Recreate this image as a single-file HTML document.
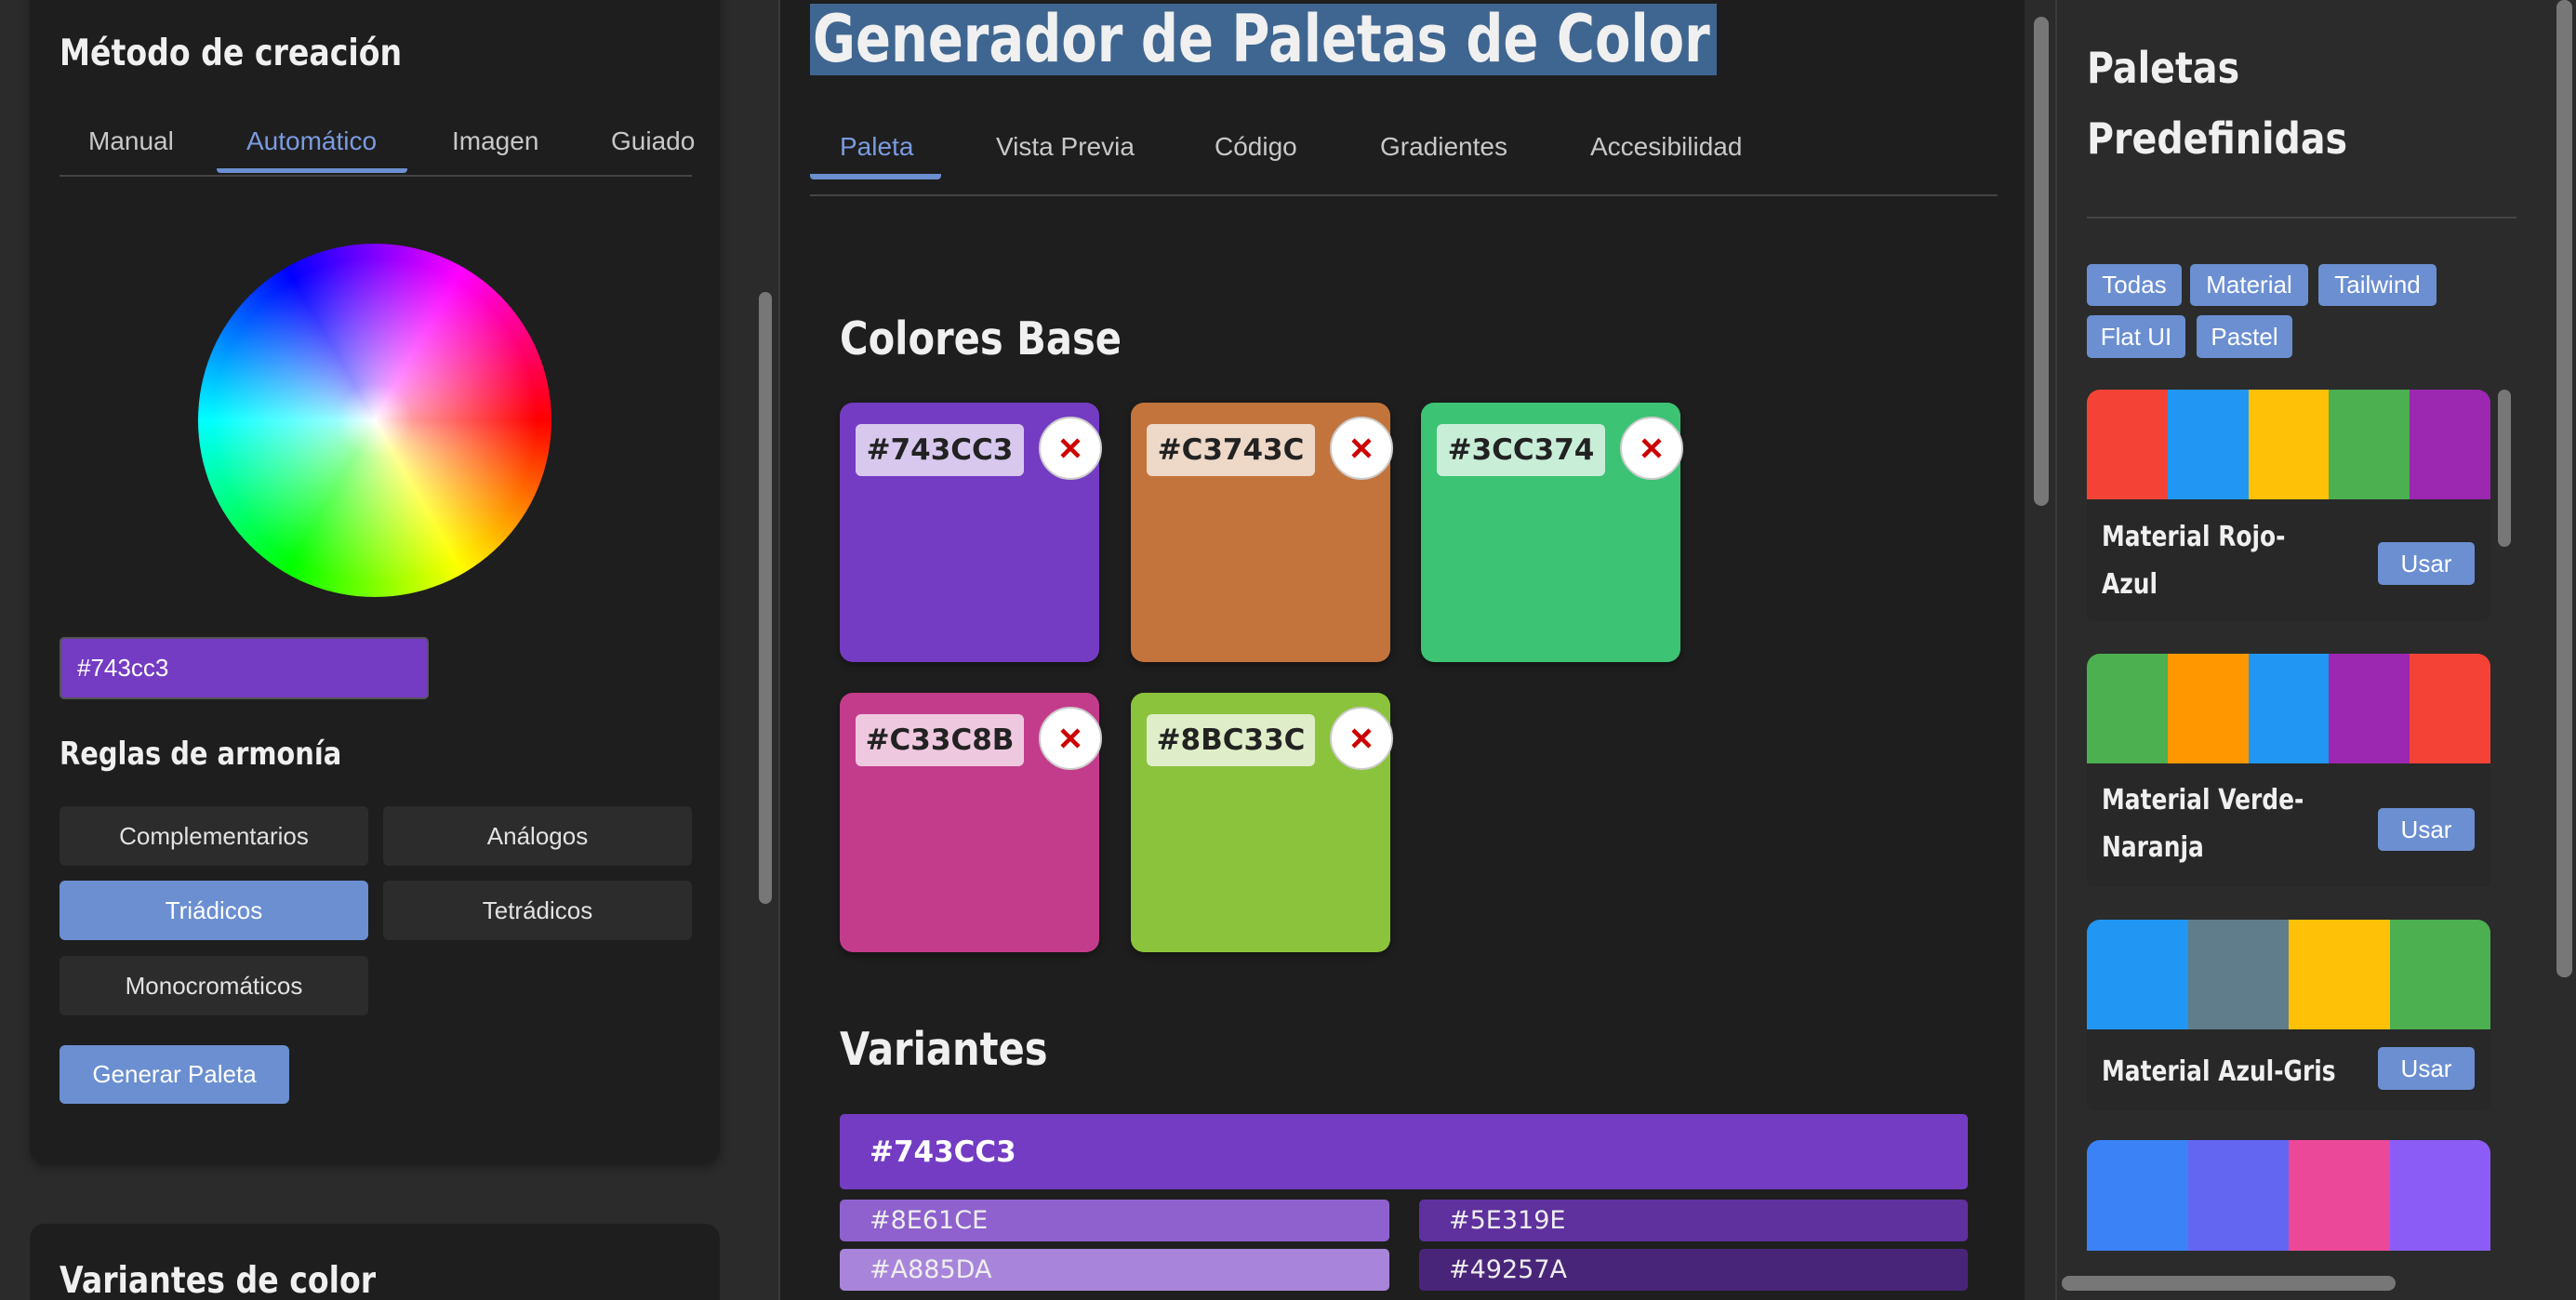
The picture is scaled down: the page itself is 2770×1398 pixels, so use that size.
<!DOCTYPE html>
<html><head><meta charset="utf-8"><style>
*{margin:0;padding:0;box-sizing:border-box}
html{width:2770px;height:1398px;overflow:hidden}
body{width:2770px;height:1398px;overflow:hidden;background:#2b2b2b;position:relative;font-family:"Liberation Sans",sans-serif;color:#e8e8e8}
.a{position:absolute}
.h{font-family:"DejaVu Sans",sans-serif;font-weight:bold;color:#f0f0f0;white-space:nowrap;transform-origin:0 50%;display:block}
.tab{position:absolute;font-size:28px;color:#c8c8c8;line-height:1}
.btn{position:absolute;background:#2c2c2c;border-radius:6px;color:#e2e2e2;font-size:26px;display:flex;align-items:center;justify-content:center}
.sw{position:absolute;width:279px;height:279px;border-radius:14px;box-shadow:0 3px 8px rgba(0,0,0,.4)}
.chip{position:absolute;left:17px;top:23px;width:181px;height:56px;border-radius:6px;background:rgba(255,255,255,.72);font-family:"DejaVu Sans",sans-serif;font-weight:bold;font-size:31px;color:#222;display:flex;align-items:center;justify-content:center}
.x{position:absolute;left:214px;top:15px;width:68px;height:68px;border-radius:50%;background:#fff;border:2px solid #ccc;display:flex;align-items:center;justify-content:center}
.vb{position:absolute;height:45px;border-radius:5px;font-family:"DejaVu Sans",sans-serif;font-size:27px;color:#eee;padding-left:32px;display:flex;align-items:center}
.fc{position:absolute;background:#6b8fd1;border-radius:5px;color:#fff;font-size:26px;display:flex;align-items:center;justify-content:center}
.pc{position:absolute;left:2244px;width:434px}
.cols{display:flex;height:119px;border-radius:14px 14px 0 0;overflow:hidden}
.cols div{flex:1}
.info{position:absolute;left:0;width:434px;background:#282828;border-radius:0 0 8px 8px}
.nm{position:absolute;left:16px;font-family:"DejaVu Sans",sans-serif;font-weight:bold;font-size:30px;color:#f0f0f0;line-height:51px;transform:scaleX(.83);transform-origin:0 0;white-space:nowrap}
.us{position:absolute;left:313px;width:104px;height:46px;background:#6b8fd1;border-radius:5px;color:#fff;font-size:26px;display:flex;align-items:center;justify-content:center}
</style></head><body>

<!-- left column -->
<div class="a" style="left:32px;top:-20px;width:742px;height:1271px;background:#1e1e1e;border-radius:16px;box-shadow:0 4px 10px rgba(0,0,0,.35)"></div>
<div class="a h" style="left:64px;top:34px;font-size:39px;line-height:48px;transform:scaleX(.85)">Método de creación</div>
<div class="tab" style="left:95px;top:138px">Manual</div>
<div class="tab" style="left:265px;top:138px;color:#7b9be0">Automático</div>
<div class="tab" style="left:486px;top:138px">Imagen</div>
<div class="tab" style="left:657px;top:138px">Guiado</div>
<div class="a" style="left:64px;top:188px;width:680px;height:2px;background:#444"></div>
<div class="a" style="left:233px;top:181px;width:205px;height:5px;background:#6b8fd1;border-radius:0 0 4px 4px"></div>
<div class="a" style="left:213px;top:262px;width:380px;height:380px;border-radius:50%;background:radial-gradient(circle,#fff 0%,rgba(255,255,255,.6) 15%,rgba(255,255,255,0) 65%),conic-gradient(from 90deg,#f00,#ff0,#0f0,#0ff,#00f,#f0f,#f00)"></div>
<div class="a" style="left:64px;top:685px;width:397px;height:67px;background:#743cc3;border:2px solid #555;border-radius:5px;font-size:26px;color:#fff;padding-left:17px;display:flex;align-items:center">#743cc3</div>
<div class="a h" style="left:64px;top:790px;font-size:34px;line-height:42px;transform:scaleX(.85)">Reglas de armonía</div>
<div class="btn" style="left:64px;top:867px;width:332px;height:64px">Complementarios</div>
<div class="btn" style="left:412px;top:867px;width:332px;height:64px">Análogos</div>
<div class="btn" style="left:64px;top:947px;width:332px;height:64px;background:#6b8fd1;color:#fff">Triádicos</div>
<div class="btn" style="left:412px;top:947px;width:332px;height:64px">Tetrádicos</div>
<div class="btn" style="left:64px;top:1028px;width:332px;height:64px">Monocromáticos</div>
<div class="btn" style="left:64px;top:1124px;width:247px;height:63px;background:#6b8fd1;color:#fff">Generar Paleta</div>
<div class="a" style="left:32px;top:1316px;width:742px;height:82px;background:#1e1e1e;border-radius:16px 16px 0 0"></div>
<div class="a h" style="left:64px;top:1354px;font-size:39px;line-height:48px;transform:scaleX(.85)">Variantes de color</div>
<div class="a" style="left:816px;top:314px;width:14px;height:658px;background:#777;border-radius:7px"></div>
<div class="a" style="left:837px;top:0;width:2px;height:1398px;background:#3a3a3a"></div>

<!-- center -->
<div class="a" style="left:839px;top:0;width:1338px;height:1398px;background:#1e1e1e"></div>
<div class="a" style="left:871px;top:4px;width:975px;height:77px;background:#3f6690"></div>
<div class="a h" style="left:874px;top:2px;font-size:70px;line-height:80px;transform:scaleX(.8)">Generador de Paletas de Color</div>
<div class="tab" style="left:903px;top:144px;color:#7b9be0">Paleta</div>
<div class="tab" style="left:1071px;top:144px">Vista Previa</div>
<div class="tab" style="left:1306px;top:144px">Código</div>
<div class="tab" style="left:1484px;top:144px">Gradientes</div>
<div class="tab" style="left:1710px;top:144px">Accesibilidad</div>
<div class="a" style="left:871px;top:209px;width:1277px;height:2px;background:#444"></div>
<div class="a" style="left:871px;top:187px;width:141px;height:6px;background:#6b8fd1;border-radius:0 0 4px 4px"></div>
<div class="a h" style="left:903px;top:336px;font-size:49px;line-height:58px;transform:scaleX(.85)">Colores Base</div>

<div class="sw" style="left:903px;top:433px;background:#743cc3"><div class="chip">#743CC3</div><div class="x"><svg width="28" height="28" viewBox="0 0 28 28"><path d="M5 5L23 23M23 5L5 23" stroke="#c00" stroke-width="4.5"/></svg></div></div>
<div class="sw" style="left:1216px;top:433px;background:#c3743c"><div class="chip">#C3743C</div><div class="x"><svg width="28" height="28" viewBox="0 0 28 28"><path d="M5 5L23 23M23 5L5 23" stroke="#c00" stroke-width="4.5"/></svg></div></div>
<div class="sw" style="left:1528px;top:433px;background:#3cc374"><div class="chip">#3CC374</div><div class="x"><svg width="28" height="28" viewBox="0 0 28 28"><path d="M5 5L23 23M23 5L5 23" stroke="#c00" stroke-width="4.5"/></svg></div></div>
<div class="sw" style="left:903px;top:745px;background:#c33c8b"><div class="chip">#C33C8B</div><div class="x"><svg width="28" height="28" viewBox="0 0 28 28"><path d="M5 5L23 23M23 5L5 23" stroke="#c00" stroke-width="4.5"/></svg></div></div>
<div class="sw" style="left:1216px;top:745px;background:#8bc33c"><div class="chip">#8BC33C</div><div class="x"><svg width="28" height="28" viewBox="0 0 28 28"><path d="M5 5L23 23M23 5L5 23" stroke="#c00" stroke-width="4.5"/></svg></div></div>

<div class="a h" style="left:903px;top:1100px;font-size:49px;line-height:58px;transform:scaleX(.85)">Variantes</div>
<div class="vb" style="left:903px;top:1198px;width:1213px;height:81px;background:#743cc3;font-weight:bold;font-size:31px;color:#fff">#743CC3</div>
<div class="vb" style="left:903px;top:1290px;width:591px;background:#8e61ce">#8E61CE</div>
<div class="vb" style="left:1526px;top:1290px;width:590px;background:#5e319e">#5E319E</div>
<div class="vb" style="left:903px;top:1343px;width:591px;background:#a885da">#A885DA</div>
<div class="vb" style="left:1526px;top:1343px;width:590px;background:#49257a">#49257A</div>

<div class="a" style="left:2177px;top:0;width:31px;height:1398px;background:#2b2b2b"></div>
<div class="a" style="left:2187px;top:18px;width:16px;height:526px;background:#777;border-radius:8px"></div>

<!-- right -->
<div class="a" style="left:2210px;top:0;width:2px;height:1398px;background:#3a3a3a"></div>
<div class="a h" style="left:2244px;top:35px;font-size:46px;line-height:76px;transform:scaleX(.86)">Paletas<br>Predefinidas</div>
<div class="a" style="left:2244px;top:233px;width:462px;height:2px;background:#444"></div>
<div class="fc" style="left:2244px;top:284px;width:102px;height:45px">Todas</div>
<div class="fc" style="left:2355px;top:284px;width:127px;height:45px">Material</div>
<div class="fc" style="left:2493px;top:284px;width:127px;height:45px">Tailwind</div>
<div class="fc" style="left:2244px;top:339px;width:106px;height:46px">Flat UI</div>
<div class="fc" style="left:2362px;top:339px;width:103px;height:46px">Pastel</div>

<div class="a" style="left:2244px;top:419px;width:462px;height:930px;overflow:hidden">
<div class="pc" style="left:0;top:0"><div class="cols"><div style="background:#f44336"></div><div style="background:#2196f3"></div><div style="background:#ffc107"></div><div style="background:#4caf50"></div><div style="background:#9c27b0"></div></div>
<div class="info" style="top:118px;height:131px"><div class="nm" style="top:15px">Material Rojo-<br>Azul</div><div class="us" style="top:46px">Usar</div></div></div>
<div class="pc" style="left:0;top:284px"><div class="cols"><div style="background:#4caf50"></div><div style="background:#ff9800"></div><div style="background:#2196f3"></div><div style="background:#9c27b0"></div><div style="background:#f44336"></div></div>
<div class="info" style="top:118px;height:133px"><div class="nm" style="top:14px">Material Verde-<br>Naranja</div><div class="us" style="top:48px">Usar</div></div></div>
<div class="pc" style="left:0;top:570px"><div class="cols"><div style="background:#2196f3"></div><div style="background:#607d8b"></div><div style="background:#ffc107"></div><div style="background:#4caf50"></div></div>
<div class="info" style="top:118px;height:87px"><div class="nm" style="top:20px">Material Azul-Gris</div><div class="us" style="top:19px">Usar</div></div></div>
<div class="pc" style="left:0;top:807px"><div class="cols"><div style="background:#3b82f6"></div><div style="background:#6366f1"></div><div style="background:#ec4899"></div><div style="background:#8b5cf6"></div></div></div>
<div class="a" style="left:442px;top:0;width:14px;height:169px;background:#777;border-radius:7px"></div>
</div>
<div class="a" style="left:2749px;top:0;width:17px;height:1051px;background:#777;border-radius:8px"></div>
<div class="a" style="left:2217px;top:1372px;width:359px;height:16px;background:#777;border-radius:8px"></div>
</body></html>
